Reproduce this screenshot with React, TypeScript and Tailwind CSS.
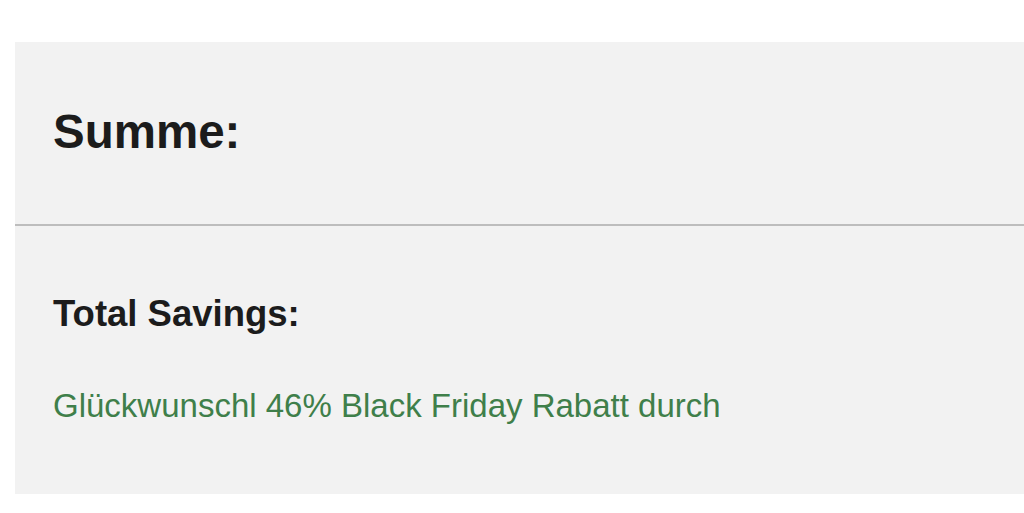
export default function App() {
  return (
    <div className="w-[1024px] h-[513px] bg-white pt-[42px] pl-[15px] overflow-hidden" style={{ fontFamily: '"Liberation Sans", Arial, sans-serif' }}>
      <div className="h-[452px] bg-[#f2f2f2] flex flex-col">
        <div className="h-[182px] pt-[66px] pl-[38px]">
          <div className="text-[47.5px] leading-none font-bold text-[#1c1c1c]">Summe:</div>
        </div>
        <div className="h-[2px] bg-[#bdbdbd]" />
        <div className="pt-[70px] pl-[38px]">
          <div className="text-[36.5px] leading-none font-bold text-[#1c1c1c]">Total Savings:</div>
          <div className="mt-[56px] text-[33px] leading-none text-[#3f7f4a]">Glückwunschl 46% Black Friday Rabatt durch</div>
        </div>
      </div>
    </div>
  );
}
